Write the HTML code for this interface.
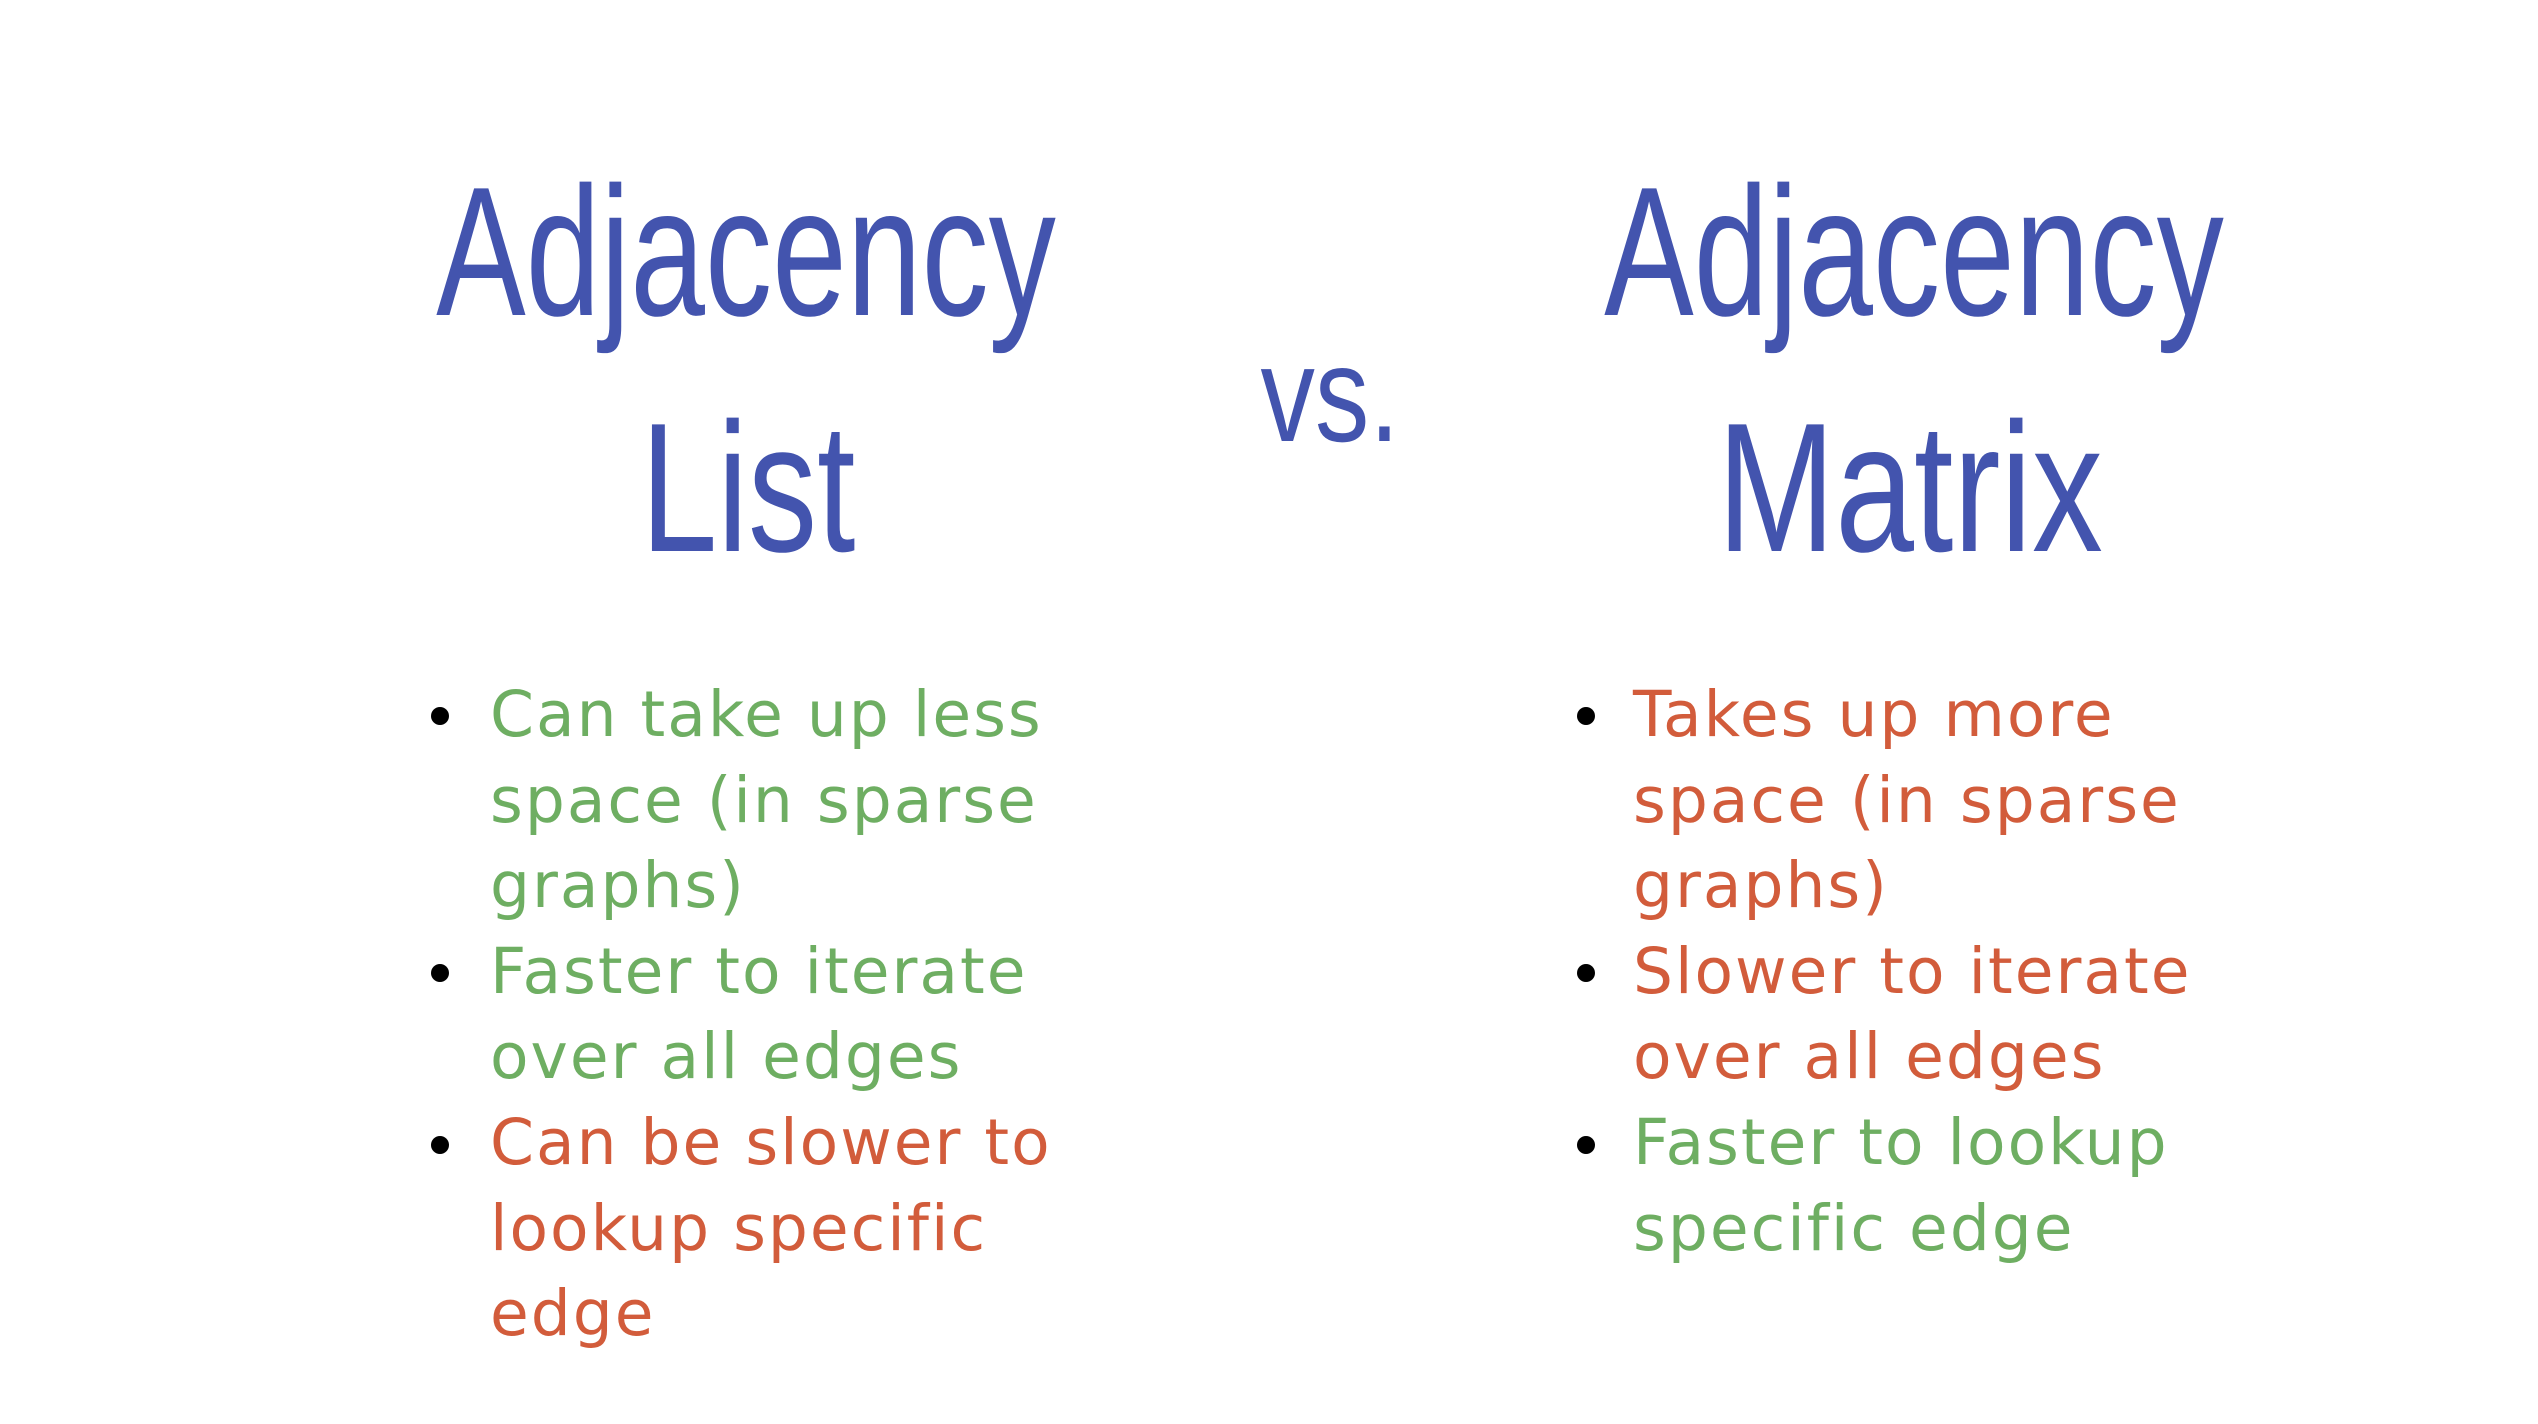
<!DOCTYPE html>
<html><head><meta charset="utf-8"><style>
html,body{margin:0;padding:0;background:#fff;width:2538px;height:1424px;overflow:hidden}
svg{display:block}
.t{font-family:"Liberation Sans",sans-serif;fill:#4354ae}
.b{font-family:"DejaVu Sans",sans-serif;font-size:63px;letter-spacing:2px}
.g{fill:#6eae62}.r{fill:#d25c3b}
</style></head><body>
<svg width="2538" height="1424" viewBox="0 0 2538 1424" xmlns="http://www.w3.org/2000/svg">
<rect width="2538" height="1424" fill="#fff"/>
<g class="t" font-size="184" text-anchor="middle">
<text transform="translate(746,315) scale(0.73,1)">Adjacency</text>
<text transform="translate(748,551) scale(0.75,1)">List</text>
<text transform="translate(1914,315) scale(0.73,1)">Adjacency</text>
<text transform="translate(1910,551) scale(0.77,1)">Matrix</text>
</g>
<text class="t" font-size="136" text-anchor="middle" transform="translate(1330,441) scale(0.8,1)">vs.</text>
<g fill="#000">
<circle cx="440" cy="716" r="9"/><circle cx="440" cy="973" r="9"/><circle cx="440" cy="1145" r="9"/>
<circle cx="1586" cy="716" r="9"/><circle cx="1586" cy="973" r="9"/><circle cx="1586" cy="1145" r="9"/>
</g>
<g class="b">
<text x="490" y="736" class="g">Can take up less</text>
<text x="490" y="822" class="g">space (in sparse</text>
<text x="490" y="907" class="g">graphs)</text>
<text x="490" y="993" class="g">Faster to iterate</text>
<text x="490" y="1078" class="g">over all edges</text>
<text x="490" y="1164" class="r">Can be slower to</text>
<text x="490" y="1250" class="r">lookup specific</text>
<text x="490" y="1335" class="r">edge</text>
<text x="1633" y="736" class="r">Takes up more</text>
<text x="1633" y="822" class="r">space (in sparse</text>
<text x="1633" y="907" class="r">graphs)</text>
<text x="1633" y="993" class="r">Slower to iterate</text>
<text x="1633" y="1078" class="r">over all edges</text>
<text x="1633" y="1164" class="g">Faster to lookup</text>
<text x="1633" y="1250" class="g">specific edge</text>
</g>
</svg>
</body></html>
